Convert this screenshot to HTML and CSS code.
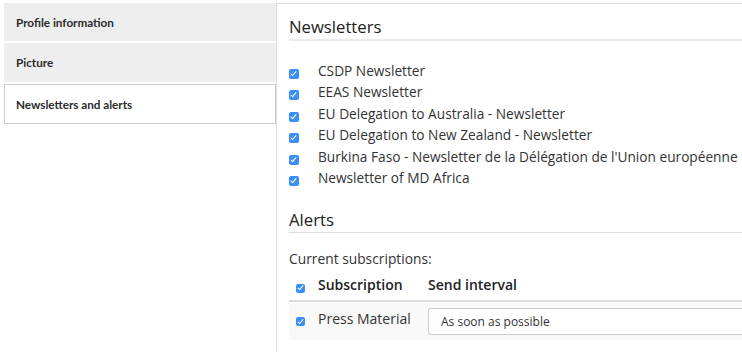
FILE: index.html
```html
<!DOCTYPE html>
<html lang="en">
<head>
    <meta charset="UTF-8">
    <meta name="viewport" content="width=device-width, initial-scale=1.0">
    <title>Newsletters and alerts</title>
    <link rel="stylesheet" href="styles.css">
</head>
<body>
    <div class="page">
        <ul class="tabs">
            <li class="tab">Profile information</li>
            <li class="tab">Picture</li>
            <li class="tab active">Newsletters and alerts</li>
        </ul>

        <div class="pane">
            <h2 class="section-title">Newsletters</h2>
            <ul class="newsletters">
                <li><label><input type="checkbox" class="check" checked>CSDP Newsletter</label></li>
                <li><label><input type="checkbox" class="check" checked>EEAS Newsletter</label></li>
                <li><label><input type="checkbox" class="check" checked>EU Delegation to Australia - Newsletter</label></li>
                <li><label><input type="checkbox" class="check" checked>EU Delegation to New Zealand - Newsletter</label></li>
                <li><label><input type="checkbox" class="check" checked>Burkina Faso - Newsletter de la Délégation de l'Union européenne</label></li>
                <li><label><input type="checkbox" class="check" checked>Newsletter of MD Africa</label></li>
            </ul>

            <h2 class="section-title alerts">Alerts</h2>
            <p class="current">Current subscriptions:</p>
            <table class="subs">
                <thead>
                    <tr>
                        <th class="col-check"><input type="checkbox" class="check small" checked></th>
                        <th class="col-name">Subscription</th>
                        <th>Send interval</th>
                    </tr>
                </thead>
                <tbody>
                    <tr>
                        <td class="col-check"><input type="checkbox" class="check small row" checked></td>
                        <td class="col-name">Press Material</td>
                        <td>
                            <select class="interval">
                                <option>As soon as possible</option>
                                <option>Daily</option>
                                <option>Weekly</option>
                            </select>
                        </td>
                    </tr>
                </tbody>
            </table>
        </div>
    </div>
</body>
</html>
```

FILE: styles.css
```css
body {
    margin: 0;
    padding: 0;
    font-family: 'Open Sans', sans-serif;
    color: #333;
    background: #fff;
    overflow: hidden;
}
.page {
    display: flex;
    align-items: flex-start;
    padding-top: 3px;
}
.tabs {
    list-style: none;
    margin: 0 0 0 4px;
    padding: 0;
    width: 272px;
    flex: none;
}
.tab {
    height: 38px;
    line-height: 38px;
    padding-left: 12px;
    margin-bottom: 2px;
    background: #eee;
    font-family: 'Lato', sans-serif;
    font-weight: bold;
    font-size: 11.7px;
    color: #2b2b2b;
}
.tab:nth-child(2) {
    height: 39px;
    line-height: 39px;
    margin-bottom: 2px;
}
.tab.active {
    background: #fff;
    border: 1px solid #ccc;
    height: 38px;
    line-height: 38px;
    padding-left: 11px;
}
.pane {
    flex: 1;
    min-width: 0;
    height: 348px;
    border-top: 1px solid #ddd;
    border-left: 1px solid #ddd;
    padding: 11px 0 0 12px;
}
.section-title {
    margin: 0;
    font-size: 16.7px;
    font-weight: normal;
    line-height: 24px;
    color: #222;
    border-bottom: 2px solid #ebebeb;
}
.alerts {
    margin-top: 20px;
    border-bottom-width: 1px;
    border-bottom-color: #ddd;
}
.newsletters {
    list-style: none;
    margin: 19px 0 0;
    padding: 0;
    font-size: 13.7px;
    line-height: 21.4px;
    white-space: nowrap;
}
.check {
    -webkit-appearance: none;
    appearance: none;
    position: relative;
    width: 10px;
    height: 10px;
    margin: 0 19px 0 0;
    vertical-align: -3px;
    background: #3b8ef6;
    border-radius: 2px;
}
.check::after {
    content: "";
    position: absolute;
    left: 3px;
    top: 1px;
    width: 2px;
    height: 5px;
    border: solid #fff;
    border-width: 0 1.5px 1.5px 0;
    transform: rotate(40deg);
}
.check.small {
    width: 9px;
    height: 9px;
    margin: 0 0 0 7px;
}
.check.small::after {
    left: 2.5px;
    top: 0.5px;
}
.check.row {
    vertical-align: -2px;
}
.current {
    margin: 15px 0 0;
    font-size: 13.8px;
    line-height: 21.4px;
}
.subs {
    width: 100%;
    margin-top: 4px;
    border-collapse: collapse;
    font-size: 14px;
    line-height: 21.4px;
    text-align: left;
}
.subs th {
    padding: 0 0 5px;
    font-weight: 600;
    border-bottom: 2px solid #ddd;
    vertical-align: top;
    color: #222;
}
.subs td {
    padding: 6px 0 5px;
    background: #f9f9f9;
    vertical-align: top;
}
.col-check {
    width: 29px;
}
.col-name {
    width: 110px;
}
.interval {
    -webkit-appearance: none;
    appearance: none;
    display: block;
    width: 100%;
    height: 27px;
    padding: 0 12px;
    border: 1px solid #ccc;
    border-right: none;
    border-radius: 3px 0 0 3px;
    background: #fff;
    font-family: 'Open Sans', sans-serif;
    font-size: 12px;
    color: #333;
}
```
